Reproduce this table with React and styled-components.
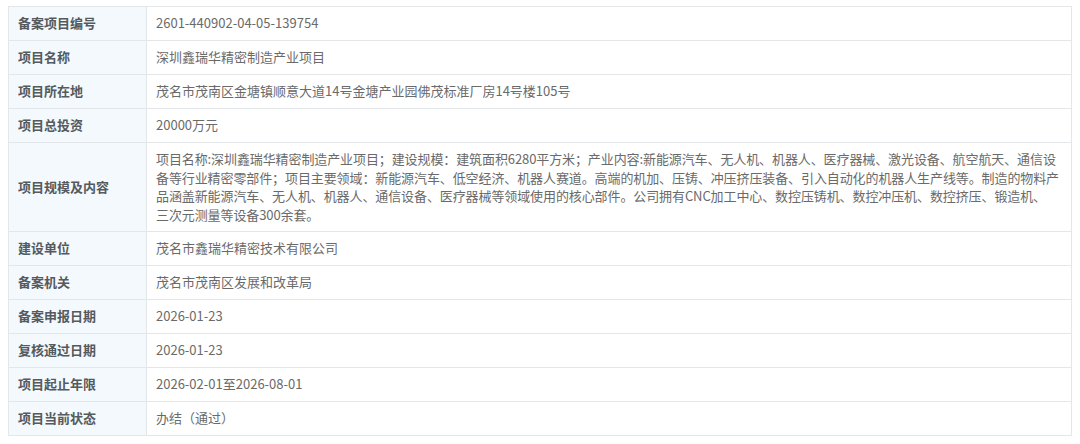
import React from "react";
import styled, { createGlobalStyle } from "styled-components";

const Global = createGlobalStyle`
  html, body { margin: 0; padding: 0; background: #ffffff; }
  body { font-family: "Microsoft YaHei", "Noto Sans CJK SC", "Noto Sans", sans-serif; }
`;

const Page = styled.div`
  padding: 6px 8px 0 8px;
`;

const Table = styled.table`
  width: 1064px;
  border-collapse: collapse;
  table-layout: fixed;
  border: 1px solid #e3e7ea;
  font-size: 13px;
  line-height: 18.5px;
`;

const Row = styled.tr`
  height: 34px;
`;

const Label = styled.th`
  width: 138px;
  box-sizing: border-box;
  text-align: left;
  vertical-align: middle;
  font-weight: 700;
  color: #555a5e;
  background: #f3f9fc;
  padding: 7px 9px;
  border: 1px solid #e3e7ea;
`;

const Value = styled.td`
  text-align: left;
  vertical-align: middle;
  color: #6a6a6a;
  background: #ffffff;
  padding: 7px 9px;
  border: 1px solid #e3e7ea;
  word-break: break-all;
`;

const Line = styled.span`
  display: block;
  white-space: nowrap;
  letter-spacing: -0.1px;
`;

const rows = [
  ["备案项目编号", "2601-440902-04-05-139754"],
  ["项目名称", "深圳鑫瑞华精密制造产业项目"],
  ["项目所在地", "茂名市茂南区金塘镇顺意大道14号金塘产业园佛茂标准厂房14号楼105号"],
  ["项目总投资", "20000万元"],
  [
    "项目规模及内容",
    [
      "项目名称:深圳鑫瑞华精密制造产业项目；建设规模：建筑面积6280平方米；产业内容:新能源汽车、无人机、机器人、医疗器械、激光设备、航空航天、通信设",
      "备等行业精密零部件；项目主要领域：新能源汽车、低空经济、机器人赛道。高端的机加、压铸、冲压挤压装备、引入自动化的机器人生产线等。制造的物料产",
      "品涵盖新能源汽车、无人机、机器人、通信设备、医疗器械等领域使用的核心部件。公司拥有CNC加工中心、数控压铸机、数控冲压机、数控挤压、锻造机、",
      "三次元测量等设备300余套。",
    ],
  ],
  ["建设单位", "茂名市鑫瑞华精密技术有限公司"],
  ["备案机关", "茂名市茂南区发展和改革局"],
  ["备案申报日期", "2026-01-23"],
  ["复核通过日期", "2026-01-23"],
  ["项目起止年限", "2026-02-01至2026-08-01"],
  ["项目当前状态", "办结（通过）"],
];

export default function App() {
  return (
    <>
      <Global />
      <Page>
        <Table>
          <tbody>
            {rows.map(([k, v]) => (
              <Row key={k}>
                <Label>{k}</Label>
                <Value>
                  {Array.isArray(v) ? v.map((l, i) => <Line key={i}>{l}</Line>) : v}
                </Value>
              </Row>
            ))}
          </tbody>
        </Table>
      </Page>
    </>
  );
}
